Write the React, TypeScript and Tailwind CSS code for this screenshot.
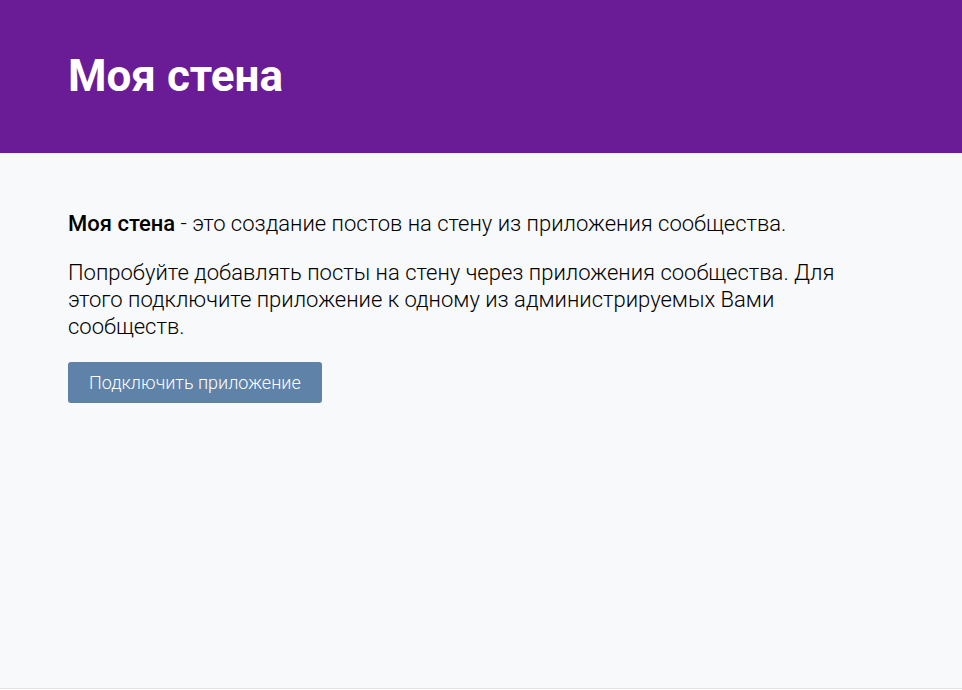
import React from 'react';

export default function App() {
  return (
    <div className="h-[689px] flex flex-col bg-[#f8f9fb] border-b border-[#dfe3e8] font-['Roboto',sans-serif] text-[#000]">
      {/* Header */}
      <header className="h-[153px] bg-[#6a1b96] flex items-center px-[68px] shrink-0">
        <h1 className="text-[44px] font-bold text-white leading-none pb-[1px]">Моя стена</h1>
      </header>

      {/* Content */}
      <main className="px-[68px] pt-[57px]">
        <div className="max-w-[785px]">
          <p className="text-[22px] font-light leading-[27px]">
            <span className="font-medium">Моя стена</span> - это создание постов на стену из приложения сообщества.
          </p>
          <p className="text-[22px] font-light leading-[27px] mt-[22px]">
            Попробуйте добавлять посты на стену через приложения сообщества. Для этого подключите приложение к одному из администрируемых Вами сообществ.
          </p>
        </div>
        <button className="mt-[22px] h-[41px] px-[21px] rounded-[3px] bg-[#5e82a8] text-white text-[18px] font-light">
          Подключить приложение
        </button>
      </main>
    </div>
  );
}
